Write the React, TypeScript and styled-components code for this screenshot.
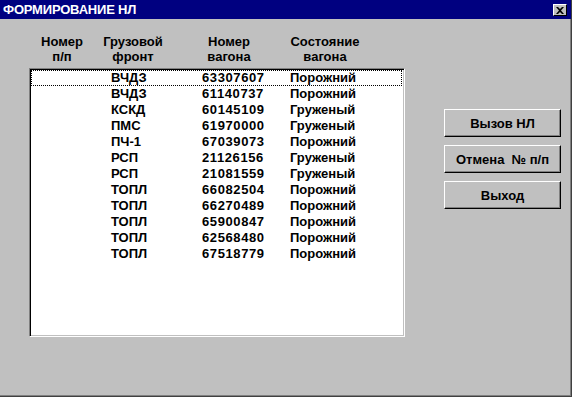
import styled, { createGlobalStyle } from "styled-components";

const GlobalStyle = createGlobalStyle`
  html, body {
    margin: 0;
    padding: 0;
    background: #c0c0c0;
  }
  body {
    font-family: "Liberation Sans", Arial, sans-serif;
    font-weight: bold;
    font-size: 13px;
    color: #000;
  }
`;

// окно
const SWindow = styled.div`
  width: 572px;
  height: 397px;
  box-sizing: border-box;
  background: #c0c0c0;
  border-right: 1px solid #404040;
  border-bottom: 1px solid #404040;
  box-shadow: inset -1px -1px 0 #808080;
  display: flex;
  flex-direction: column;
  overflow: hidden;
`;

const STitleBar = styled.div`
  height: 19px;
  background: #000080;
  color: #fff;
  display: flex;
  align-items: center;
  justify-content: space-between;
  padding: 0 4px 0 3px;
`;

const STitle = styled.span`
  font-size: 13px;
  letter-spacing: -0.2px;
`;

const SClose = styled.div`
  width: 14px;
  height: 12px;
  box-sizing: border-box;
  background: #c0c0c0;
  border-top: 1px solid #fff;
  border-left: 1px solid #fff;
  border-right: 1px solid #000;
  border-bottom: 1px solid #000;
  display: flex;
  align-items: center;
  justify-content: center;
  margin-top: 1px;
`;

const SBody = styled.div`
  flex: 1;
  display: flex;
  padding: 15px 0 0 29px;
`;

const SLeft = styled.div`
  display: flex;
  flex-direction: column;
`;

const SHeader = styled.div`
  display: grid;
  grid-template-columns: 66px 76px 116px 76px;
  line-height: 15px;
  height: 30px;
  margin-bottom: 4px;
`;

const SHeadCell = styled.div`
  text-align: center;
`;

const SList = styled.div`
  width: 376px;
  height: 269px;
  box-sizing: border-box;
  background: #fff;
  border-top: 1px solid #808080;
  border-left: 1px solid #808080;
  border-right: 1px solid #fff;
  border-bottom: 1px solid #fff;
  box-shadow: inset 1px 1px 0 #000, inset -1px -1px 0 #c0c0c0;
  padding: 1px;
`;

const SRow = styled.div<{ $focus?: boolean }>`
  display: grid;
  grid-template-columns: 80px 91px 88px 1fr;
  height: 16px;
  line-height: 16px;
  box-sizing: border-box;
  margin-right: 1px;
  outline: ${(p) => (p.$focus ? "1px dotted #000" : "none")};
  outline-offset: -1px;
`;

const SNum = styled.span`
  letter-spacing: 0.6px;
`;

const SButtons = styled.div`
  display: flex;
  flex-direction: column;
  gap: 8px;
  margin: 75px 0 0 39px;
`;

const SButton = styled.button`
  width: 117px;
  height: 28px;
  box-sizing: border-box;
  background: #c0c0c0;
  font: inherit;
  color: #000;
  border-top: 1px solid #fff;
  border-left: 1px solid #fff;
  border-right: 1px solid #000;
  border-bottom: 1px solid #000;
  box-shadow: inset -1px -1px 0 #808080;
  padding: 0;
`;

const rows = [
  ["ВЧДЗ", "63307607", "Порожний"],
  ["ВЧДЗ", "61140737", "Порожний"],
  ["КСКД", "60145109", "Груженый"],
  ["ПМС", "61970000", "Груженый"],
  ["ПЧ-1", "67039073", "Порожний"],
  ["РСП", "21126156", "Груженый"],
  ["РСП", "21081559", "Груженый"],
  ["ТОПЛ", "66082504", "Порожний"],
  ["ТОПЛ", "66270489", "Порожний"],
  ["ТОПЛ", "65900847", "Порожний"],
  ["ТОПЛ", "62568480", "Порожний"],
  ["ТОПЛ", "67518779", "Порожний"],
];

export default function App() {
  return (
    <>
      <GlobalStyle />
      <SWindow>
        <STitleBar>
          <STitle>ФОРМИРОВАНИЕ НЛ</STitle>
          <SClose>
            <svg width="8" height="7" viewBox="0 0 8 7">
              <path d="M0 0h2l2 2 2-2h2L5 3.5 8 7H6L4 5 2 7H0l3-3.5z" fill="#000" />
            </svg>
          </SClose>
        </STitleBar>
        <SBody>
          <SLeft>
            <SHeader>
              <SHeadCell>Номер<br />п/п</SHeadCell>
              <SHeadCell>Грузовой<br />фронт</SHeadCell>
              <SHeadCell>Номер<br />вагона</SHeadCell>
              <SHeadCell>Состояние<br />вагона</SHeadCell>
            </SHeader>
            <SList>
              {rows.map((r, i) => (
                <SRow key={i} $focus={i === 0}>
                  <span />
                  <span>{r[0]}</span>
                  <SNum>{r[1]}</SNum>
                  <span>{r[2]}</span>
                </SRow>
              ))}
            </SList>
          </SLeft>
          <SButtons>
            <SButton>Вызов НЛ</SButton>
            <SButton>Отмена&nbsp;&nbsp;№ п/п</SButton>
            <SButton>Выход</SButton>
          </SButtons>
        </SBody>
      </SWindow>
    </>
  );
}
